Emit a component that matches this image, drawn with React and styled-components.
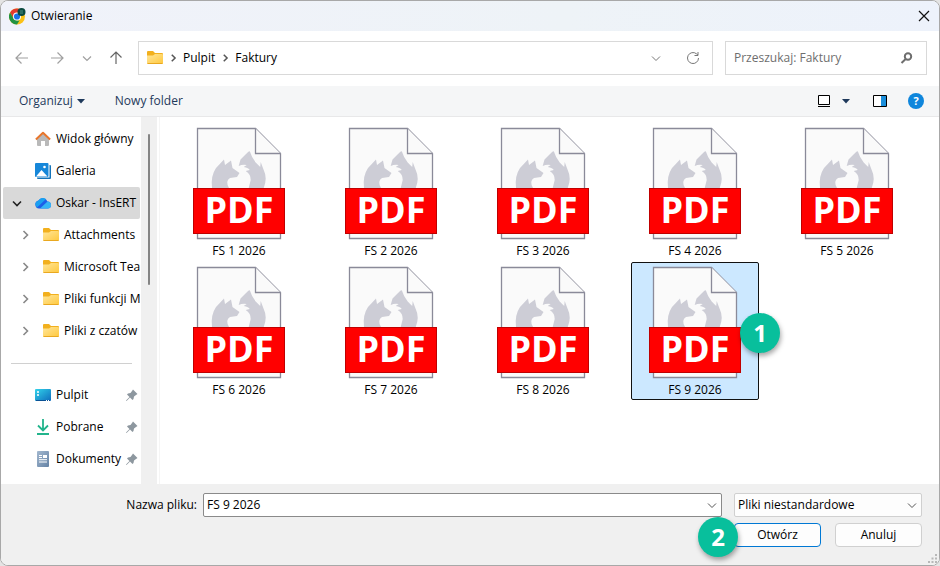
import React from "react";
import styled, { createGlobalStyle } from "styled-components";

const GlobalStyle = createGlobalStyle`
    * {
        box-sizing: border-box;
    }

    body {
        margin: 0;
        background: #e4e4e4;
        color: #000;
        font-family: "Open Sans", "Noto Sans", sans-serif;
        font-size: 12px;
        line-height: 16px;
    }

    button, input, select {
        color: inherit;
        font: inherit;
    }

    svg {
        display: block;
        flex: none;
    }
`;

const Dialog = styled.div`
    display: flex;
    flex-direction: column;
    min-height: 100vh;
    overflow: hidden;
    border: 1px solid #a8a8a8;
    border-radius: 8px;
    background: #fff;
`;

const TitleBar = styled.header`
    display: flex;
    align-items: center;
    height: 30px;
    padding: 0 7px 0 8px;
    gap: 5px;
    background: linear-gradient(90deg, #f0f2fa, #eef3f7 60%, #edf2fb);
`;

const Title = styled.h1`
    flex: 1;
    margin: 0;
    font-size: 12px;
    font-weight: 400;
`;

const IconButton = styled.button`
    display: flex;
    align-items: center;
    justify-content: center;
    width: ${({ $width }) => $width || 16}px;
    height: 24px;
    padding: 0;
    border: 0;
    background: none;
    color: ${({ $color }) => $color || "#777"};
`;

const NavBar = styled.nav`
    display: flex;
    align-items: center;
    height: 55px;
    padding: 0 12px 1px 3px;
`;

const NavButtons = styled.div`
    display: flex;
    align-items: center;
    margin-right: 6px;
`;

const AddressBar = styled.div`
    display: flex;
    flex: 1;
    align-items: center;
    height: 34px;
    margin-right: 12px;
    padding: 0 8px;
    gap: 5px;
    border: 1px solid #d9d9d9;
    color: #555;
`;

const Crumb = styled.a`
    color: #000;
    text-decoration: none;
`;

const AddressActions = styled.div`
    display: flex;
    margin-left: auto;
    gap: 16px;
`;

const SearchBox = styled.label`
    display: flex;
    align-items: center;
    width: 202px;
    height: 34px;
    padding: 0 12px 0 8px;
    border: 1px solid #d9d9d9;
    color: #6e6e6e;
`;

const SearchInput = styled.input`
    flex: 1;
    min-width: 0;
    padding: 0;
    border: 0;
    outline: 0;
    background: none;

    &::placeholder {
        color: #6e6e6e;
        opacity: 1;
    }
`;

const Toolbar = styled.div`
    display: flex;
    align-items: center;
    height: 31px;
    padding: 0 7px 0 18px;
    border-bottom: 1px solid #e8e8e9;
    background: #f5f6f7;
    color: #1e395b;
`;

const ToolbarButton = styled.button`
    display: flex;
    align-items: center;
    margin-right: 30px;
    padding: 0;
    gap: 4px;
    border: 0;
    background: none;
`;

const ToolbarActions = styled.div`
    display: flex;
    align-items: center;
    margin-left: auto;
`;

const Body = styled.div`
    display: flex;
    flex: 1;
`;

const Sidebar = styled.aside`
    width: 140px;
    padding: 6px 1px 9px 2px;
    overflow: hidden;
`;

const TreeItem = styled.a`
    display: flex;
    align-items: center;
    height: 32px;
    padding-left: ${({ $nested }) => ($nested ? 16 : 8)}px;
    gap: 5px;
    overflow: hidden;
    border-radius: 2px;
    background: ${({ $active }) => ($active ? "#d9d9d9" : "none")};
    color: inherit;
    text-decoration: none;
    white-space: nowrap;
`;

const Expander = styled.span`
    display: flex;
    flex: none;
    width: 12px;
    margin-right: 7px;
    color: ${({ $active }) => ($active ? "#222" : "#888")};
`;

const PinSlot = styled.span`
    margin: 0 2px 0 auto;
`;

const Separator = styled.hr`
    height: 1px;
    margin: 16px 8px 15px;
    border: 0;
    background: #d0d0d0;
`;

const ScrollTrack = styled.div`
    display: flex;
    justify-content: center;
    width: 16px;
    padding-top: 17px;
    background: #f0f0f0;
`;

const ScrollThumb = styled.div`
    width: 2px;
    height: 151px;
    border-radius: 1px;
    background: #858585;
`;

const FileArea = styled.main`
    display: grid;
    flex: 1;
    grid-template-columns: repeat(auto-fill, 128px);
    align-content: start;
    margin-left: 2px;
    padding: 6px 12px 16px 15px;
    gap: 1px 24px;
    border-left: 1px solid #f5f5f5;
`;

const FileTile = styled.button`
    position: relative;
    display: flex;
    flex-direction: column;
    align-items: center;
    height: 138px;
    padding: 3px 0 0;
    border: 1px solid ${({ $selected }) => ($selected ? "#111" : "transparent")};
    border-radius: 2px;
    background: ${({ $selected }) => ($selected ? "#cce8ff" : "none")};
`;

const StepBadge = styled.span`
    position: absolute;
    z-index: 1;
    top: 50%;
    ${({ $side }) => $side}: ${({ $overhang }) => -$overhang}px;
    display: flex;
    align-items: center;
    justify-content: center;
    width: 40px;
    height: 40px;
    margin-top: -18px;
    border-radius: 50%;
    background: #08bf9c;
    box-shadow: 1px 3px 5px rgba(0, 0, 0, 0.35);
    color: #fff;
    font-size: 24px;
    font-weight: 700;
    line-height: 32px;
`;

const Footer = styled.footer`
    display: grid;
    grid-template-columns: 196px 1fr 188px;
    align-content: start;
    align-items: center;
    padding: 9px 17px 18px 0;
    gap: 6px;
    background: #f0f0f0;
`;

const FieldLabel = styled.label`
    text-align: right;
`;

const ComboBox = styled.div`
    display: flex;
    align-items: center;
    height: 24px;
    margin-right: 6px;
    padding: 0 3px;
    border: 1px solid #8a8a8a;
    border-radius: 2px;
    background: #fff;
    color: #555;
`;

const ComboInput = styled.input`
    flex: 1;
    min-width: 0;
    padding: 0;
    border: 0;
    outline: 0;
    background: none;
    color: #000;
`;

const TypeField = styled.div`
    display: grid;
    align-items: center;
    color: #555;

    & > * {
        grid-area: 1 / 1;
    }

    & > svg {
        justify-self: end;
        margin-right: 4px;
        pointer-events: none;
    }
`;

const TypeSelect = styled.select`
    width: 100%;
    height: 24px;
    padding: 0 20px 0 3px;
    appearance: none;
    border: 1px solid #d0d0d0;
    border-radius: 2px;
    background: #fdfdfd;
    color: #000;
`;

const DialogActions = styled.div`
    display: grid;
    grid-column: 3;
    grid-template-columns: 1fr 1fr;
    gap: 14px;
`;

const DialogButton = styled.button`
    position: relative;
    height: 24px;
    padding: 0;
    border: 1px solid ${({ $primary }) => ($primary ? "#0078d4" : "#d0d0d0")};
    border-radius: 4px;
    background: #fdfdfd;
`;

const Grip = styled.svg`
    position: absolute;
    right: 3px;
    bottom: 3px;
`;

const CHEVRONS = {
    down: "M2 4.5 6 8.5 10 4.5",
    right: "M4.5 2 8.5 6 4.5 10",
};

const Chevron = ({ direction = "down", size = 12, weight = 1 }) => (
    <svg width={size} height={size} viewBox="0 0 12 12" fill="none" stroke="currentColor" strokeWidth={weight}>
        <path d={CHEVRONS[direction]} />
    </svg>
);

const Caret = () => (
    <svg width="8" height="5" viewBox="0 0 8 5" fill="currentColor">
        <path d="M0 0h8L4 4.5z" />
    </svg>
);

const ARROWS = {
    left: "M14 8H2M7.5 2.5 2 8l5.5 5.5",
    right: "M2 8h12M8.5 2.5 14 8l-5.5 5.5",
    up: "M8 14V2M2.5 7.5 8 2l5.5 5.5",
};

const Arrow = ({ direction }) => (
    <svg width="16" height="16" viewBox="0 0 16 16" fill="none" stroke="currentColor" strokeWidth="1.2">
        <path d={ARROWS[direction]} />
    </svg>
);

const ChromeIcon = () => (
    <svg width="17" height="17" viewBox="0 0 17 17">
        <circle cx="8" cy="8.5" r="8" fill="#fbc116" />
        <path d="M1.07 4.5A8 8 0 0 1 14.93 4.5H8L4.54 10.5z" fill="#e33b2e" />
        <path d="M1.07 4.5 4.54 10.5 8 12.5h2.5L8 16.5A8 8 0 0 1 1.07 4.5z" fill="#229342" />
        <circle cx="8" cy="8.5" r="4" fill="#fff" />
        <circle cx="8" cy="8.5" r="3.1" fill="#1a73e8" />
        <circle cx="12.5" cy="4" r="4" fill="#0b4a40" />
        <path d="M11 3h3M11 5h3" stroke="#4f9183" />
    </svg>
);

const FolderIcon = () => (
    <svg width="16" height="16" viewBox="0 0 16 16">
        <defs>
            <linearGradient id="folder" x2="1" y2="1">
                <stop stopColor="#ffe69a" />
                <stop offset="1" stopColor="#ffc83d" />
            </linearGradient>
        </defs>
        <path d="M0 2q0-1 1-1h5l2 2h7q1 0 1 1v4H0z" fill="#f2b01e" />
        <path d="M0 5.5h6L8 4h7q1 0 1 1v8q0 1-1 1H1q-1 0-1-1z" fill="url(#folder)" />
        <path d="M.5 13.5h15" stroke="#e9a820" />
    </svg>
);

const HomeIcon = () => (
    <svg width="16" height="16" viewBox="0 0 16 16">
        <path d="M2 7 8 2l6 5v7q0 1-1 1h-3v-5H6v5H3q-1 0-1-1z" fill="#b9b9b9" />
        <path d="M.9 8.5 8 1.8l7.1 6.7" fill="none" stroke="#e8762c" strokeWidth="2" strokeLinejoin="round" />
    </svg>
);

const GalleryIcon = () => (
    <svg width="16" height="16" viewBox="0 0 16 16">
        <path d="M14.5 2h.5q1 0 1 1v12q0 1-1 1H3q-1 0-1-1v-.5h12.500z" fill="#1373b9" />
        <rect width="13.5" height="14" rx="1" fill="#1687d9" />
        <path d="M1 13.500 6.500 7l6 6.500z" fill="#fff" />
        <circle cx="9.500" cy="4" r="1.3" fill="#fff" />
    </svg>
);

const CloudIcon = () => (
    <svg width="16" height="12" viewBox="0 0 16 12">
        <path d="M4 11.5A4 4 0 0 1 3.5 3.6 5 5 0 0 1 12.5 4.5 3.5 3.5 0 0 1 12.5 11.5z" fill="#1d5fe8" />
        <path d="M5 11.5 12.5 4.5A3.5 3.5 0 0 1 12.5 11.5z" fill="#35b5f5" />
        <path d="M3.500 3.600A5 5 0 0 1 11 2L2 10.500Q-2 6 3.500 3.600z" fill="#1aa0f0" />
    </svg>
);

const DesktopIcon = () => (
    <svg width="16" height="12" viewBox="0 0 16 12">
        <defs>
            <linearGradient id="desktop" x2="1" y2="1">
                <stop stopColor="#31d3ea" />
                <stop offset="1" stopColor="#0f6cbd" />
            </linearGradient>
        </defs>
        <rect width="16" height="12" rx="1" fill="url(#desktop)" />
        <path d="M2 3h2M2 6h2" stroke="#fff" strokeWidth="1.5" />
        <path d="M1 11.5h14" stroke="#0b5295" />
        <path d="M11 11.5h3" stroke="#fff" strokeDasharray="1 1" />
    </svg>
);

const DownloadIcon = () => (
    <svg width="16" height="16" viewBox="0 0 16 16" fill="none" stroke="#22b48c" strokeWidth="1.8">
        <path d="M8 0v11M3 6.5l5 5 5-5M2 15h12" />
    </svg>
);

const DocumentIcon = () => (
    <svg width="16" height="16" viewBox="0 0 16 16">
        <defs>
            <linearGradient id="document" x2="1" y2="1">
                <stop stopColor="#a3b8cf" />
                <stop offset="1" stopColor="#6482a5" />
            </linearGradient>
        </defs>
        <rect x="2" width="12" height="16" rx="1" fill="url(#document)" />
        <path d="M4 4.5h3M4 6.5h3M4 8.700h8M4 11h8" stroke="#fff" />
        <path d="M8 4h4v3H8z" fill="#fff" />
    </svg>
);

const PinIcon = () => (
    <svg width="12" height="12" viewBox="0 0 12 12">
        <path d="M7 .5 11.500 5l-1.500 1L8 7.500 7.500 10l-1 1L4 8.500.500 12 0 11.500 3.500 8 1 5.500l1-1 2.500-.500L6 2z" fill="#8d979f" />
    </svg>
);

const PdfIcon = () => (
    <svg width="94" height="116" viewBox="0 0 94 116">
        <path d="M5.500 1.500h58l25 25v85h-83z" fill="#fafafa" stroke="#8a8a99" strokeWidth="1.3" />
        <path
            d="M20 61q-1.500-12 4-20l8-8.500 1 5.500 6-4.500 1.500 7.500 7 5-2.500 4-7 1q-5 3-1 10z"
            fill="#cdcdd6"
        />
        <path
            d="M56.300 24.700 48.500 32.500 46.700 39q4-2 8-1l-3 2q5 1 6 3l-4 1q5 3 5 9l-2 8h15q4-10 0-18l-3-8-.500 5-4.500-4.500q-4-5-5.900-11.300z"
            fill="#cdcdd6"
        />
        <path d="M63.500 1.500v25h25" fill="#fafafa" stroke="#8a8a99" strokeWidth="1.3" />
        <rect x="1.500" y="61.500" width="91" height="45" fill="#f00" stroke="#c00000" />
        <text x="47" y="96" textAnchor="middle" fill="#fff" fontSize="36" fontWeight="700">
            PDF
        </text>
    </svg>
);

const SIDE_ITEMS = [
    { name: "Widok główny", icon: <HomeIcon /> },
    { name: "Galeria", icon: <GalleryIcon /> },
    { name: "Oskar - InsERT", icon: <CloudIcon />, expander: "down", active: true },
    { name: "Attachments", icon: <FolderIcon />, expander: "right", nested: true },
    { name: "Microsoft Teams", icon: <FolderIcon />, expander: "right", nested: true },
    { name: "Pliki funkcji M", icon: <FolderIcon />, expander: "right", nested: true },
    { name: "Pliki z czatów w", icon: <FolderIcon />, expander: "right", nested: true },
];

const PINNED_ITEMS = [
    { name: "Pulpit", icon: <DesktopIcon />, pinned: true },
    { name: "Pobrane", icon: <DownloadIcon />, pinned: true },
    { name: "Dokumenty", icon: <DocumentIcon />, pinned: true },
];

const FILES = [1, 2, 3, 4, 5, 6, 7, 8, 9].map(n => `FS ${n} 2026`);
const SELECTED = "FS 9 2026";

const SideItem = ({ name, icon, expander, active, nested, pinned }) => (
    <TreeItem href="#" $active={active} $nested={nested}>
        <Expander $active={active}>
            {expander && <Chevron direction={expander} weight={1.6} />}
        </Expander>
        {icon}
        <span>{name}</span>
        {pinned && (
            <PinSlot>
                <PinIcon />
            </PinSlot>
        )}
    </TreeItem>
);

const App = () => (
    <>
        <GlobalStyle />
        <Dialog role="dialog" aria-labelledby="dialog-title">
            <TitleBar>
                <ChromeIcon />
                <Title id="dialog-title">Otwieranie</Title>
                <IconButton aria-label="Zamknij" $color="#111">
                    <svg width="12" height="12" viewBox="0 0 12 12" stroke="currentColor" strokeWidth="1.2">
                        <path d="M1 1l10 10M11 1 1 11" />
                    </svg>
                </IconButton>
            </TitleBar>
            <NavBar>
                <NavButtons>
                    <IconButton aria-label="Wstecz" $width={36} $color="#a0a0a0">
                        <Arrow direction="left" />
                    </IconButton>
                    <IconButton aria-label="Dalej" $width={34} $color="#a0a0a0">
                        <Arrow direction="right" />
                    </IconButton>
                    <IconButton aria-label="Ostatnie" $width={26} $color="#a0a0a0">
                        <Chevron weight={1.2} />
                    </IconButton>
                    <IconButton aria-label="W górę" $width={32} $color="#666">
                        <Arrow direction="up" />
                    </IconButton>
                </NavButtons>
                <AddressBar>
                    <FolderIcon />
                    <Chevron direction="right" size={10} weight={1.8} />
                    <Crumb href="#">Pulpit</Crumb>
                    <Chevron direction="right" size={10} weight={1.8} />
                    <Crumb href="#">Faktury</Crumb>
                    <AddressActions>
                        <IconButton aria-label="Poprzednie lokalizacje" $width={20}>
                            <Chevron />
                        </IconButton>
                        <IconButton aria-label="Odśwież" $width={22}>
                            <svg width="14" height="14" viewBox="0 0 14 14" fill="none" stroke="currentColor">
                                <path d="M12.5 7A5.500 5.500 0 1 1 10.500 2.800L12 4.200M12 1v3.500H8.500" />
                            </svg>
                        </IconButton>
                    </AddressActions>
                </AddressBar>
                <SearchBox>
                    <SearchInput aria-label="Przeszukaj" placeholder="Przeszukaj: Faktury" />
                    <svg width="14" height="14" viewBox="0 0 14 14" fill="none" stroke="currentColor" strokeWidth="2">
                        <circle cx="8" cy="5.5" r="3.2" />
                        <path d="M5.700 8 1.500 12" />
                    </svg>
                </SearchBox>
            </NavBar>
            <Toolbar>
                <ToolbarButton>
                    Organizuj <Caret />
                </ToolbarButton>
                <ToolbarButton>Nowy folder</ToolbarButton>
                <ToolbarActions>
                    <IconButton aria-label="Widok" $color="#000">
                        <svg width="12" height="12" viewBox="0 0 12 12" fill="#fff" stroke="currentColor">
                            <path d="M.5.5h11v9H.5zM0 11.5h12" />
                        </svg>
                    </IconButton>
                    <IconButton aria-label="Więcej opcji" $width={28} $color="#1e395b">
                        <Caret />
                    </IconButton>
                    <IconButton aria-label="Okienko podglądu" $width={40} $color="#000">
                        <svg width="14" height="12" viewBox="0 0 14 12">
                            <path d="M.5.5h13v11H.5z" fill="#fff" stroke="currentColor" />
                            <path d="M8 1h5v10H8z" fill="#1b8fdc" />
                        </svg>
                    </IconButton>
                    <IconButton aria-label="Pomoc" $width={32}>
                        <svg width="16" height="16" viewBox="0 0 16 16">
                            <circle cx="8" cy="8" r="8" fill="#0f86dc" />
                            <text x="8" y="12" textAnchor="middle" fill="#fff" fontSize="11" fontWeight="700">
                                ?
                            </text>
                        </svg>
                    </IconButton>
                </ToolbarActions>
            </Toolbar>
            <Body>
                <Sidebar>
                    {SIDE_ITEMS.map(item => (
                        <SideItem key={item.name} {...item} />
                    ))}
                    <Separator />
                    {PINNED_ITEMS.map(item => (
                        <SideItem key={item.name} {...item} />
                    ))}
                </Sidebar>
                <ScrollTrack>
                    <ScrollThumb />
                </ScrollTrack>
                <FileArea>
                    {FILES.map(name => (
                        <FileTile key={name} $selected={name === SELECTED}>
                            <PdfIcon />
                            <span>{name}</span>
                            {name === SELECTED && (
                                <StepBadge $side="right" $overhang={22}>
                                    1
                                </StepBadge>
                            )}
                        </FileTile>
                    ))}
                </FileArea>
            </Body>
            <Footer>
                <FieldLabel htmlFor="file-name">Nazwa pliku:</FieldLabel>
                <ComboBox>
                    <ComboInput id="file-name" defaultValue={SELECTED} />
                    <Chevron />
                </ComboBox>
                <TypeField>
                    <TypeSelect aria-label="Typ pliku">
                        <option>Pliki niestandardowe</option>
                    </TypeSelect>
                    <Chevron />
                </TypeField>
                <DialogActions>
                    <DialogButton $primary>
                        Otwórz
                        <StepBadge $side="left" $overhang={37}>
                            2
                        </StepBadge>
                    </DialogButton>
                    <DialogButton>Anuluj</DialogButton>
                </DialogActions>
            </Footer>
            <Grip width="9" height="9" viewBox="0 0 9 9" fill="#b8b8b8">
                <path d="M7 0h2v2H7zM3.500 3.500h2v2h-2zM7 3.500h2v2H7zM0 7h2v2H0zM3.500 7h2v2h-2zM7 7h2v2H7z" />
            </Grip>
        </Dialog>
    </>
);

export default App;
